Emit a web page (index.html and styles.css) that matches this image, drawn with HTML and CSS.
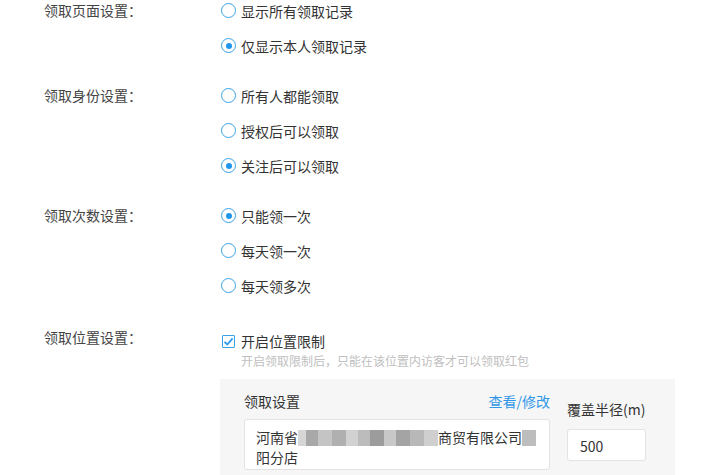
FILE: index.html
```html
<!DOCTYPE html>
<html lang="zh-CN">
<head>
    <meta charset="UTF-8">
    <title>领取设置</title>
    <link rel="stylesheet" href="styles.css">
</head>
<body>
    <div class="form">
        <div class="row">
            <div class="label">领取页面设置：</div>
            <div class="options">
                <div class="option"><span class="radio"></span>显示所有领取记录</div>
                <div class="option"><span class="radio checked"></span>仅显示本人领取记录</div>
            </div>
        </div>

        <div class="row">
            <div class="label">领取身份设置：</div>
            <div class="options">
                <div class="option"><span class="radio"></span>所有人都能领取</div>
                <div class="option"><span class="radio"></span>授权后可以领取</div>
                <div class="option"><span class="radio checked"></span>关注后可以领取</div>
            </div>
        </div>

        <div class="row">
            <div class="label">领取次数设置：</div>
            <div class="options">
                <div class="option"><span class="radio checked"></span>只能领一次</div>
                <div class="option"><span class="radio"></span>每天领一次</div>
                <div class="option"><span class="radio"></span>每天领多次</div>
            </div>
        </div>

        <div class="row row-location">
            <div class="label">领取位置设置：</div>
            <div class="options">
                <div class="check-line">
                    <span class="checkbox">
                        <svg width="11" height="11" viewBox="0 0 11 11"><path d="M1.5 5.8 L4.3 8.5 L9.6 2.3" fill="none" stroke="#2d9bf0" stroke-width="1.8"/></svg>
                    </span>开启位置限制
                </div>
                <div class="hint">开启领取限制后，只能在该位置内访客才可以领取红包</div>

                <div class="location">
                    <div class="loc-main">
                        <div class="loc-head">
                            <span>领取设置</span>
                            <a class="link" href="#">查看/修改</a>
                        </div>
                        <div class="address">河南省<span class="blur"></span>商贸有限公司<span class="blur short"></span><br>阳分店</div>
                    </div>
                    <div class="loc-side">
                        <div class="side-label">覆盖半径(m)</div>
                        <div class="radius">500</div>
                    </div>
                </div>
            </div>
        </div>
    </div>
</body>
</html>
```

FILE: styles.css
```css
body {
    margin: 0;
    background: #fff;
    color: #333;
    font-family: "Noto Sans CJK SC", "Microsoft YaHei", sans-serif;
    font-size: 14px;
}

.form {
    margin-top: -7px;
    padding-left: 44px;
}

.row {
    display: grid;
    grid-template-columns: 177px 1fr;
    margin-bottom: 15px;
}

.row-location {
    margin-top: 17px;
}

.label {
    height: 35px;
    line-height: 35px;
    color: #444;
}

.option {
    display: flex;
    align-items: center;
    height: 35px;
}

.radio {
    width: 13px;
    height: 13px;
    border: 1px solid #3aa1e6;
    border-radius: 50%;
    margin-right: 5px;
    position: relative;
    box-sizing: content-box;
}

.radio.checked::after {
    content: "";
    position: absolute;
    left: 3.5px;
    top: 3.5px;
    width: 6px;
    height: 6px;
    border-radius: 50%;
    background: #1e96ee;
}

.check-line {
    display: flex;
    align-items: center;
    height: 24px;
    margin-top: 9px;
}

.checkbox {
    display: flex;
    align-items: center;
    justify-content: center;
    width: 11px;
    height: 11px;
    border: 1px solid #3aa1e6;
    border-radius: 1px;
    margin-left: 1px;
    margin-right: 6px;
    background: #fff;
}

.hint {
    padding-left: 20px;
    font-size: 12px;
    line-height: 16px;
    color: #c0c0c0;
}

.location {
    display: flex;
    margin-top: 10px;
    margin-left: -1px;
    width: 455px;
    height: 120px;
    padding: 12px 0 0 24px;
    box-sizing: border-box;
    background: #f6f6f6;
}

.loc-main {
    width: 306px;
}

.loc-head {
    display: flex;
    justify-content: space-between;
    line-height: 20px;
}

.link {
    color: #2f97e8;
    text-decoration: none;
}

.address {
    margin-top: 8px;
    height: 51px;
    padding: 7px 10px 0 11px;
    box-sizing: border-box;
    background: #fff;
    border: 1px solid #e3e3e3;
    border-radius: 3px;
    line-height: 20px;
}

.blur {
    display: inline-block;
    vertical-align: -3px;
    width: 140px;
    height: 16px;
    background: linear-gradient(to right,
        #d6d6d6 0 8px, #a8a8a8 8px 20px, #c4c4c4 20px 34px, #b0b0b0 34px 48px,
        #d2d2d2 48px 60px, #bcbcbc 60px 72px, #9c9c9c 72px 86px, #c8c8c8 86px 98px,
        #a4a4a4 98px 112px, #b8b8b8 112px 126px, #cfcfcf 126px 140px);
}

.blur.short {
    width: 14px;
    background: #bdbdbd;
}

.loc-side {
    margin-left: 17px;
    padding-top: 8px;
}

.side-label {
    line-height: 20px;
}

.radius {
    margin-top: 10px;
    width: 79px;
    height: 32px;
    line-height: 32px;
    padding-left: 12px;
    box-sizing: border-box;
    background: #fff;
    border: 1px solid #e3e3e3;
    border-radius: 3px;
}
```
